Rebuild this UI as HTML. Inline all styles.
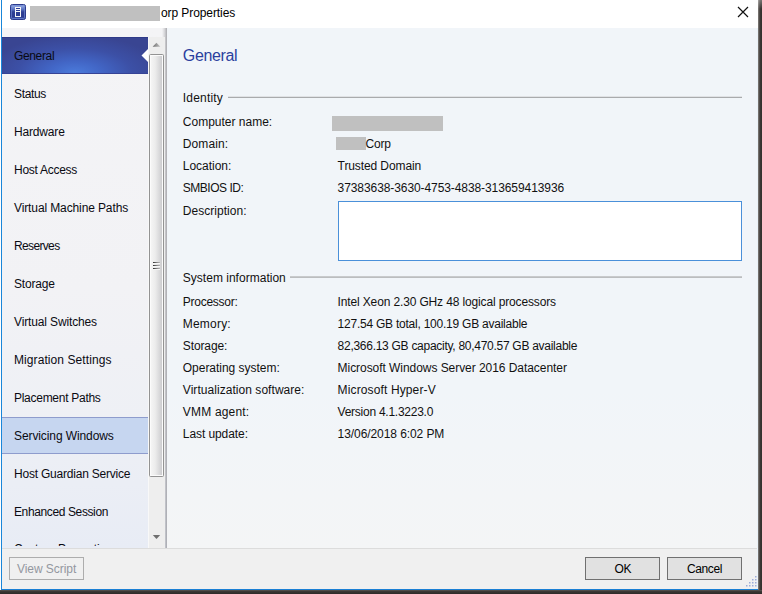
<!DOCTYPE html>
<html>
<head>
<meta charset="utf-8">
<title>Properties</title>
<style>
html,body{margin:0;padding:0;}
body{width:762px;height:594px;overflow:hidden;background:#fff;position:relative;
 font-family:"Liberation Sans",sans-serif;font-size:12px;color:#111;}
div,span{position:absolute;box-sizing:border-box;white-space:nowrap;}
svg{position:absolute;}
#lb{left:1px;top:0;width:1px;height:590px;background:#1a86d9;}
#rb{left:757px;top:28px;width:1px;height:562px;background:#e9f1f8;}
#bb{left:1px;top:589px;width:757px;height:1px;background:#1a7fd4;}
#shr{left:758px;top:0;width:4px;height:594px;background:linear-gradient(90deg,#8d8985 0,#5a5653 25%,#3b3734 60%,#33302d 100%);}
#shb{left:0;top:590px;width:762px;height:4px;background:linear-gradient(180deg,#5a5653 0,#3a3633 40%,#2e2a28 100%);}
#side{left:2px;top:28px;width:165px;height:520px;background:linear-gradient(180deg,#f4f4f6 0,#f2f2f5 50%,#eef0f5 75%,#e8ecf5 100%);}
#sshadow{left:162px;top:28px;width:5px;height:520px;background:linear-gradient(90deg,rgba(150,150,155,0) 0,rgba(150,150,155,.35) 55%,rgba(150,150,155,.8) 100%);}
#track{left:148px;top:37px;width:17px;height:511px;background:#eeeeee;}
#thumb{left:149px;top:54px;width:15px;height:423px;border:1px solid #939393;border-radius:1.5px;box-shadow:inset 0 0 0 1px #fbfbfb;background:linear-gradient(90deg,#f7f7f7 0,#ececec 40%,#c8c8cb 100%);}
.gl{left:153px;width:7px;height:2px;border-bottom:1px solid #f6f6f6;background:linear-gradient(90deg,#303030 0,#8a8a8a 60%,#b8b8b8 100%);}
#main{left:167px;top:28px;width:590px;height:520px;background:linear-gradient(180deg,#f1f5f9 0,#f1f5f9 70%,#f4f5f6 100%);}
#foot{left:2px;top:548px;width:755px;height:41px;background:#f0f0f0;border-top:1px solid #dcdcdc;}
#sel{left:2px;top:37px;width:146px;height:37px;background:radial-gradient(ellipse 88px 38px at 50% 100%,#4b7bdb 0,#4266c6 30%,#3c50a6 65%,#394592 100%);border-top:1px solid #2f3a88;border-bottom:1px solid #364396;}
#hov{left:2px;top:417px;width:146px;height:37px;background:#c6d6f0;border-top:1px solid #8e9ccd;border-bottom:1px solid #8e9ccd;}
.btn{height:23px;border:1px solid #707070;background:#e1e1e1;}
.g{background:#c0c0c0;}
.hl{height:1px;background:#b4b7ba;}
</style>
</head>
<body>
<!-- title bar -->
<svg style="left:10px;top:4px" width="16" height="16" viewBox="0 0 16 16">
  <defs><linearGradient id="ig" x1="0" y1="0" x2="0" y2="1"><stop offset="0" stop-color="#a3b8ea"/><stop offset="0.3" stop-color="#5f78c4"/><stop offset="0.5" stop-color="#2f3f94"/><stop offset="0.8" stop-color="#2c3b90"/><stop offset="1" stop-color="#4157ae"/></linearGradient></defs>
  <rect x="0.5" y="0.5" width="15" height="15" rx="1.8" fill="url(#ig)" stroke="#2b3a8c"/>
  <rect x="1.5" y="1.5" width="13" height="13" rx="1" fill="none" stroke="#6f88d2" stroke-opacity="0.7"/>
  <rect x="5.5" y="3.5" width="5" height="9" fill="#2c3c92" stroke="#f6f6f6"/>
  <rect x="6" y="5" width="4" height="1" fill="#f6f6f6"/>
  <rect x="6" y="7" width="4" height="1" fill="#f6f6f6"/>
</svg>
<div class="g" style="left:30px;top:6px;width:130px;height:15px"></div>
<span style="left:161.0px;top:4.84px;font-size:12px;line-height:16px;letter-spacing:-0.084px;color:#000">orp Properties</span>
<svg style="left:737px;top:6px" width="12" height="12" viewBox="0 0 12 12"><path d="M1 1 L11 11 M11 1 L1 11" stroke="#111" stroke-width="1.2" fill="none"/></svg>

<!-- sidebar -->
<div id="side"></div>
<div id="sshadow"></div>
<div id="sel"></div>
<div id="hov"></div>
<span style="left:14.0px;top:47.84px;font-size:12px;line-height:16px;letter-spacing:-0.358px;color:#0a0a12">General</span>
<span style="left:14.0px;top:85.84px;font-size:12px;line-height:16px;letter-spacing:-0.355px;color:#0a0a12">Status</span>
<span style="left:14.0px;top:123.84px;font-size:12px;line-height:16px;letter-spacing:-0.166px;color:#0a0a12">Hardware</span>
<span style="left:14.0px;top:161.84px;font-size:12px;line-height:16px;letter-spacing:-0.276px;color:#0a0a12">Host Access</span>
<span style="left:14.0px;top:199.84px;font-size:12px;line-height:16px;letter-spacing:-0.115px;color:#0a0a12">Virtual Machine Paths</span>
<span style="left:14.0px;top:237.84px;font-size:12px;line-height:16px;letter-spacing:-0.648px;color:#0a0a12">Reserves</span>
<span style="left:14.0px;top:275.84px;font-size:12px;line-height:16px;letter-spacing:-0.190px;color:#0a0a12">Storage</span>
<span style="left:14.0px;top:313.84px;font-size:12px;line-height:16px;letter-spacing:-0.135px;color:#0a0a12">Virtual Switches</span>
<span style="left:14.0px;top:351.84px;font-size:12px;line-height:16px;letter-spacing:0.081px;color:#0a0a12">Migration Settings</span>
<span style="left:14.0px;top:389.84px;font-size:12px;line-height:16px;letter-spacing:-0.275px;color:#0a0a12">Placement Paths</span>
<span style="left:14.0px;top:427.84px;font-size:12px;line-height:16px;letter-spacing:-0.099px;color:#0a0a12">Servicing Windows</span>
<span style="left:14.0px;top:465.84px;font-size:12px;line-height:16px;letter-spacing:-0.211px;color:#0a0a12">Host Guardian Service</span>
<span style="left:14.0px;top:503.84px;font-size:12px;line-height:16px;letter-spacing:-0.380px;color:#0a0a12">Enhanced Session</span>
<span style="left:14.0px;top:540.84px;font-size:12px;line-height:16px;letter-spacing:-0.081px;color:#0a0a12">Custom Properties</span>
<div style="left:2px;top:546px;width:146px;height:2px;background:#e8ecf5"></div>
<div id="track"></div><div style="left:148px;top:37px;width:1px;height:511px;background:#f8f8f8"></div>
<svg style="left:152px;top:42px" width="9" height="6" viewBox="0 0 9 6"><defs><linearGradient id="ag" x1="0" y1="0" x2="1" y2="0"><stop offset="0" stop-color="#6c6c6c"/><stop offset="1" stop-color="#c4c4c4"/></linearGradient></defs><path d="M0.6 4.7 L4.5 0.7 L8.4 4.7 Z" fill="url(#ag)"/></svg>
<div id="thumb"></div>
<div class="gl" style="top:262px"></div><div class="gl" style="top:265px"></div><div class="gl" style="top:268px"></div>
<svg style="left:152px;top:534px" width="9" height="6" viewBox="0 0 9 6"><path d="M0.8 1 L4.5 5 L8.2 1 Z" fill="#6f6f6f"/></svg>
<svg style="left:141px;top:49px" width="7" height="13" viewBox="0 0 7 13"><path d="M7 0 L0.5 6.5 L7 13 Z" fill="#fff"/></svg>

<!-- main -->
<div id="main"></div>
<div class="hl" style="left:228px;top:96px;width:514px;background:#e0e2e5"></div>
<div class="hl" style="left:228px;top:97px;width:514px;background:#a9abad"></div>
<div class="g" style="left:332px;top:116px;width:111px;height:15px"></div>
<div class="g" style="left:336px;top:137px;width:30px;height:13px"></div>
<div style="left:338px;top:201px;width:404px;height:60px;background:#fff;border:1px solid #4a90d9"></div>
<div class="hl" style="left:290px;top:276px;width:452px;height:2px;background:linear-gradient(180deg,#c8cacc 0,#c8cacc 50%,#bbbdbf 50%)"></div>

<!-- footer -->
<div id="foot"></div>
<div class="btn" style="left:9px;top:557px;width:75px;background:#f0f0f0;border-color:#adadad"></div>
<div class="btn" style="left:585px;top:557px;width:75px"></div>
<div class="btn" style="left:667px;top:557px;width:75px"></div>
<span style="left:182.8px;top:46.46px;font-size:16px;line-height:20px;letter-spacing:-0.346px;color:#2b3f9e">General</span>
<span style="left:182.8px;top:89.84px;font-size:12px;line-height:16px;letter-spacing:0.187px;color:#111">Identity</span>
<span style="left:182.8px;top:113.84px;font-size:12px;line-height:16px;letter-spacing:0.002px;color:#111">Computer name:</span>
<span style="left:182.8px;top:135.84px;font-size:12px;line-height:16px;letter-spacing:0.087px;color:#111">Domain:</span>
<span style="left:182.8px;top:157.84px;font-size:12px;line-height:16px;letter-spacing:-0.023px;color:#111">Location:</span>
<span style="left:182.8px;top:179.84px;font-size:12px;line-height:16px;letter-spacing:-0.484px;color:#111">SMBIOS ID:</span>
<span style="left:182.8px;top:202.84px;font-size:12px;line-height:16px;letter-spacing:0.028px;color:#111">Description:</span>
<span style="left:182.8px;top:269.84px;font-size:12px;line-height:16px;letter-spacing:0.016px;color:#111">System information</span>
<span style="left:182.8px;top:293.84px;font-size:12px;line-height:16px;letter-spacing:-0.256px;color:#111">Processor:</span>
<span style="left:182.8px;top:315.84px;font-size:12px;line-height:16px;letter-spacing:0.204px;color:#111">Memory:</span>
<span style="left:182.8px;top:337.84px;font-size:12px;line-height:16px;letter-spacing:-0.109px;color:#111">Storage:</span>
<span style="left:182.8px;top:359.84px;font-size:12px;line-height:16px;letter-spacing:-0.028px;color:#111">Operating system:</span>
<span style="left:182.8px;top:381.84px;font-size:12px;line-height:16px;letter-spacing:0.049px;color:#111">Virtualization software:</span>
<span style="left:182.8px;top:403.84px;font-size:12px;line-height:16px;letter-spacing:0.190px;color:#111">VMM agent:</span>
<span style="left:182.8px;top:425.84px;font-size:12px;line-height:16px;letter-spacing:-0.080px;color:#111">Last update:</span>
<span style="left:337.6px;top:157.84px;font-size:12px;line-height:16px;letter-spacing:-0.102px;color:#111">Trusted Domain</span>
<span style="left:337.6px;top:179.84px;font-size:12px;line-height:16px;letter-spacing:-0.085px;color:#111">37383638-3630-4753-4838-313659413936</span>
<span style="left:337.6px;top:293.84px;font-size:12px;line-height:16px;letter-spacing:-0.142px;color:#111">Intel Xeon 2.30 GHz 48 logical processors</span>
<span style="left:337.6px;top:315.84px;font-size:12px;line-height:16px;letter-spacing:-0.234px;color:#111">127.54 GB total, 100.19 GB available</span>
<span style="left:337.6px;top:337.84px;font-size:12px;line-height:16px;letter-spacing:-0.277px;color:#111">82,366.13 GB capacity, 80,470.57 GB available</span>
<span style="left:337.6px;top:359.84px;font-size:12px;line-height:16px;letter-spacing:-0.053px;color:#111">Microsoft Windows Server 2016 Datacenter</span>
<span style="left:337.6px;top:381.84px;font-size:12px;line-height:16px;letter-spacing:0.128px;color:#111">Microsoft Hyper-V</span>
<span style="left:337.6px;top:403.84px;font-size:12px;line-height:16px;letter-spacing:-0.254px;color:#111">Version 4.1.3223.0</span>
<span style="left:337.6px;top:425.84px;font-size:12px;line-height:16px;letter-spacing:-0.077px;color:#111">13/06/2018 6:02 PM</span>
<span style="left:365.5px;top:135.84px;font-size:12px;line-height:16px;letter-spacing:-0.179px;color:#111">Corp</span>
<span style="left:17.0px;top:560.84px;font-size:12px;line-height:16px;letter-spacing:-0.056px;color:#93979f">View Script</span>
<span style="left:614.6px;top:560.84px;font-size:12px;line-height:16px;letter-spacing:-0.522px;color:#000">OK</span>
<span style="left:687.1px;top:560.84px;font-size:12px;line-height:16px;letter-spacing:-0.427px;color:#000">Cancel</span>
<svg style="left:746px;top:576px" width="11" height="11" viewBox="0 0 11 11" fill="#9bacd9">
  <rect x="9" y="0" width="1.5" height="1.5"/><rect x="6" y="3" width="1.5" height="1.5"/><rect x="9" y="3" width="1.5" height="1.5"/>
  <rect x="3" y="6" width="1.5" height="1.5"/><rect x="6" y="6" width="1.5" height="1.5"/><rect x="9" y="6" width="1.5" height="1.5"/>
  <rect x="0" y="9" width="1.5" height="1.5"/><rect x="3" y="9" width="1.5" height="1.5"/><rect x="6" y="9" width="1.5" height="1.5"/><rect x="9" y="9" width="1.5" height="1.5"/>
</svg>
<div id="lb"></div><div id="rb"></div><div id="bb"></div><div id="shr"></div><div style="left:758px;top:0;width:4px;height:9px;background:linear-gradient(180deg,rgba(255,255,255,.32) 0,rgba(255,255,255,0) 100%)"></div><div id="shb"></div>
</body>
</html>
